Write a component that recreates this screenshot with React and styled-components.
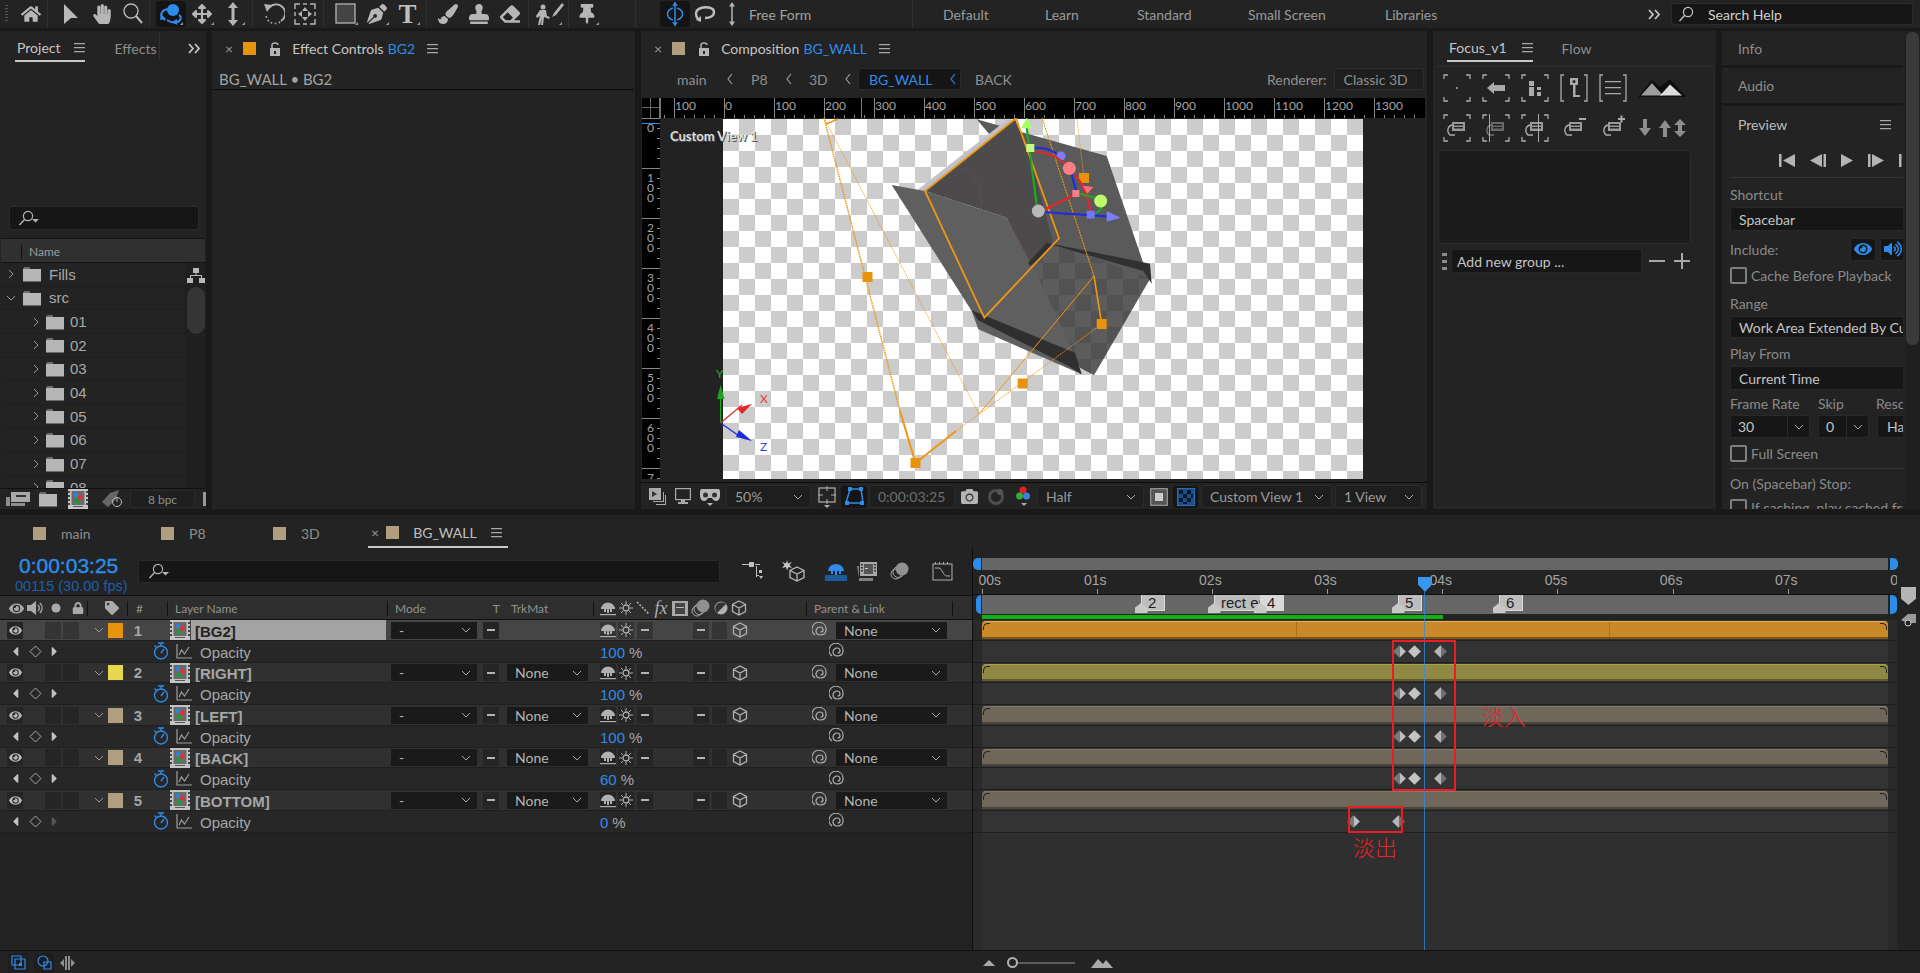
import React from "react";
import styled, { createGlobalStyle } from "styled-components";
import {
  FaHome, FaHandPaper, FaArrowsAlt, FaPenNib, FaPaintBrush, FaStamp, FaEraser,
  FaThumbtack, FaEye, FaLock, FaTag, FaCamera, FaVolumeUp, FaCaretLeft, FaCaretRight,
} from "react-icons/fa";

const BLUE = "#2d8ceb";
const SAND = "#b09f7e";

const Global = createGlobalStyle`
  html, body { margin: 0; padding: 0; background: #191919; overflow: hidden; }
  body { font-family: Lato, "Open Sans", sans-serif; font-size: 14px; color: #a6a6a6; }
  svg { display: block; flex: none; }
`;

const Page = styled.div`
  width: 1920px;
  height: 973px;
  display: flex;
  flex-direction: column;
  background: #191919;
  overflow: hidden;
`;

/* ---------- icons ---------- */
const Ic = ({ w = 16, h = 16, v, c = "#a8a8a8", children }) => (
  <svg width={w} height={h} viewBox={v || `0 0 ${w} ${h}`} fill={c}>{children}</svg>
);
const Line = ({ c = "#a8a8a8", s = 1, ...rest }) => <path fill="none" stroke={c} strokeWidth={s} {...rest} />;

const MenuIcon = () => (
  <Ic w={11} h={10} c="#a8a8a8"><path d="M0 0h11v1.2H0zM0 4h11v1.2H0zM0 8h11v1.2H0z" /></Ic>
);
const Chevrons = () => (
  <Ic w={13} h={11}><Line s={1.8} c="#c4c4c4" d="M1 1l4 4.5-4 4.5M7 1l4 4.5-4 4.5" /></Ic>
);
const Caret = ({ c = "#a8a8a8" }) => (
  <Ic w={10} h={6}><Line c={c} d="M1 1l4 4 4-4" /></Ic>
);
const TwirlRight = () => <Ic w={6} h={10}><Line c="#999" d="M1 1l4 4-4 4" /></Ic>;
const CrumbChev = ({ c = "#a0a0a0" }) => <Ic w={6} h={12}><Line c={c} s={1.1} d="M5 1L1 6l4 5" /></Ic>;
const LockOpen = () => (
  <Ic w={10} h={14} c="#b4b4b4">
    <path d="M0 6h10v8H0z" /><Line c="#b4b4b4" s={1.5} d="M2 6V3a3 2 0 0 1 6 0" />
    <path d="M4 9h2v3H4z" fill="#232323" />
  </Ic>
);
const SearchGlass = ({ c = "#b4b4b4", drop }) => (
  <Ic w={22} h={16}>
    <circle cx="10" cy="6" r="4.6" fill="none" stroke={c} strokeWidth="1.2" />
    <Line c={c} s={1.4} d="M6.5 9.5L1.5 15" />
    {drop && <path d="M14 9h7l-3.5 3.5z" fill={c} />}
  </Ic>
);
const Folder = ({ w = 18 }) => (
  <Ic w={w} h={16} v="0 0 18 16" c="#b6b6b6">
    <path d="M0 2.5h7V1.5H1zM0 3h18v12H0z" /><path d="M0 15h18v1H0z" fill="#6a6a6a" />
  </Ic>
);
const ArrowTool = () => (
  <Ic w={16} h={22} c="#b8b8b8"><path d="M1 1l14 14-7 0-7 6z" /></Ic>
);
const ZoomTool = () => (
  <Ic w={22} h={24}>
    <circle cx="9" cy="9" r="7" fill="none" stroke="#b8b8b8" strokeWidth="1.4" />
    <Line c="#b8b8b8" s={2} d="M14 14l6 7" />
  </Ic>
);
const OrbitTool = () => (
  <Ic w={24} h={24}>
    <circle cx="14" cy="8" r="6" fill={BLUE} />
    <Line c={BLUE} s={2} d="M9 7c-6 1-8 5-6 8l3 3M20 13c3 2 2 6-2 7-3 1-7 0-10-2" />
    <path d="M2 12l5 5-6 1zM18 17v6l-5-3z" fill={BLUE} />
  </Ic>
);
const DollyTool = () => (
  <Ic w={14} h={24} c="#b4b4b4"><path d="M7 0l5 6H8.5v12H12l-5 6-5-6h3.5V6H2z" /></Ic>
);
const UndoTool = () => (
  <Ic w={22} h={24}>
    <Line c="#b4b4b4" s={1.8} d="M6 6a9 9 0 1 1 12 13" />
    <Line c="#b4b4b4" s={1.6} strokeDasharray="1.5 2.5" d="M17 20a9 9 0 0 1-14-8" />
    <path d="M1 2l8 1-5 7z" fill="#b4b4b4" />
  </Ic>
);
const SnapTool = () => (
  <Ic w={22} h={22} c="#b4b4b4">
    <Line c="#b4b4b4" s={1.4} d="M1 6V1h5M16 1h5v5M21 16v5h-5M6 21H1v-5M9 1h4M9 21h4M1 9v4M21 9v4" />
    <path d="M11 4l3 4H8zM11 18l3-4H8zM4 11l4-3v6zM18 11l-4-3v6z" />
  </Ic>
);
const RectTool = () => (
  <Ic w={22} h={22}><rect x="1" y="1" width="19" height="19" fill="#444" stroke="#aaa" strokeWidth="1.4" /></Ic>
);
const StackedRoto = () => (
  <Ic w={28} h={24} v="0 0 28 24" c="#b4b4b4">
    <circle cx="7" cy="5" r="2.5" />
    <path d="M4 8h6l1 6 3 1-1 2-5-2-1 8H5l1-7-2 7H2l2-9-3 2-1-2z" />
    <path d="M26 1l-8 10-2 4 4-2 8-10z" />
  </Ic>
);
const AxisTool = () => (
  <Ic w={24} h={24} v="0 0 24 32">
    <Line c={BLUE} s={2} d="M12 0v32" />
    <path d="M12 0l4 5H8zM12 32l4-5H8z" fill={BLUE} />
    <Line c={BLUE} s={2} d="M9 8C4 10 2 13 2 16s2 6 7 8M15 8c5 2 7 5 7 8s-2 6-7 8" />
  </Ic>
);
const LassoTool = () => (
  <Ic w={22} h={16}>
    <Line c="#bdbdbd" s={2.4} d="M4 13C1 9 1 4 7 2c6-2 13 0 13 4s-4 6-9 6" />
    <path d="M2 14l5-4 0 6z" fill="#bdbdbd" />
  </Ic>
);
const IArrowTool = () => (
  <Ic w={10} h={24} v="0 0 10 32" c="#b4b4b4"><path d="M5 0l4 6H6v20h3l-4 6-4-6h3V6H1z" /></Ic>
);

const ShyIcon = ({ c = "#b0b0b0", w = 16, h = 15 }) => (
  <Ic w={w} h={h} v="0 0 16 15" c={c}>
    <path d="M1 8a7 6.5 0 0 1 14 0H12v3H10V8H9v4H7V8H6v3H4V8z" /><path d="M0 13h16v1.2H0z" />
  </Ic>
);
const SunIcon = () => (
  <Ic w={14} h={14}>
    <circle cx="7" cy="7" r="3" fill="none" stroke="#b0b0b0" strokeWidth="1.3" />
    <Line c="#b0b0b0" d="M7 0v3M7 11v3M0 7h3M11 7h3M2 2l2 2M10 10l2 2M12 2l-2 2M2 12l2-2" />
  </Ic>
);
const CubeIcon = () => (
  <Ic w={16} h={16}>
    <Line c="#b0b0b0" s={1.3} d="M8 1l6.5 3.5v7L8 15l-6.5-3.5v-7zM1.5 4.5L8 8l6.500-3.500M8 8v7" />
  </Ic>
);
const Spiral = () => (
  <Ic w={16} h={16}>
    <Line c="#b0b0b0" s={1.2} d="M3 13A7 7 0 1 1 14 8c0 4-3 5-6 5-2.5 0-4-2-4-4s2-4 4-4 3 1.5 3 3-1 2-2.5 2" />
  </Ic>
);
const Stopwatch = () => (
  <Ic w={16} h={18}>
    <circle cx="8" cy="10.5" r="6.5" fill="none" stroke={BLUE} strokeWidth="1.4" />
    <Line c={BLUE} s={1.4} d="M5 1h6M8 1v3M8 11l3-4M1.5 3.5l2 2" />
  </Ic>
);
const GraphIcon = () => (
  <Ic w={16} h={15}>
    <Line c="#9f9f9f" s={1.2} d="M1 0v14h15M3 11l2.5-5 3 4L13 3" />
  </Ic>
);
const CompIcon = () => (
  <Ic w={20} h={20}>
    <rect width="20" height="20" fill="#c4c4c4" />
    <rect x="3.5" y="2" width="13" height="14" fill="#6a6a6a" />
    <path d="M0 2h2v2H0zM0 6h2v2H0zM0 10h2v2H0zM0 14h2v2H0zM18 2h2v2h-2zM18 6h2v2h-2zM18 10h2v2h-2zM18 14h2v2h-2z" fill="#444" />
    <path d="M5 17h10v1H5z" fill="#555" />
    <circle cx="8" cy="6" r="2.5" fill="#2a84d8" />
    <rect x="10" y="6" width="4.5" height="4.5" fill="#d8353a" />
    <path d="M9 8l3.5 6h-7z" fill="#1d9a3a" />
  </Ic>
);
const Diamond = ({ c = "#a8a8a8" }) => (
  <Ic w={13} h={13}><path d="M6.5 1L12 6.5 6.5 12 1 6.5z" fill="none" stroke={c} /></Ic>
);
const TreeIcon = () => (
  <Ic w={22} h={20} c="#c0c0c0">
    <path d="M1 3h7V1h5v5H8V4H1zM14 3h5v1h-5zM15 5h1v11h-1zM15 9h3v3h3v-3h-6zM15 14h3v1h-3z" />
    <path d="M18 15h4l-2 3z" />
  </Ic>
);
const StarCube = () => (
  <Ic w={24} h={22}>
    <path d="M5 0l1 3.5L10 2 7.5 5 10 8l-3.5-1L5 10.5 4 7 0 8l2.5-3L0 2l4 1.5z" fill="#c8c8c8" />
    <Line c="#b8b8b8" s={1.3} d="M15 7l7 3.5v7L15 21l-7-3.5v-7zM8 10.5l7 3.5 7-3.5M15 14v7" />
  </Ic>
);
const ShyActive = () => (
  <Ic w={22} h={19} v="0 0 22 19">
    <path d="M3 9a8 7 0 0 1 16 0h-3v3h-2V9h-2v4h-2V9H8v3H6V9z" fill={BLUE} /><path d="M0 13h22v6H0z" fill="#1d5a9a" />
  </Ic>
);
const FilmStack = () => (
  <Ic w={20} h={20} c="#a8a8a8">
    <path d="M3 1h17v14H3z" /><path d="M0 5h2v15h14v-3H2z" opacity=".7" />
    <path d="M7 3h9v10H7z" fill="#555" /><path d="M8 7h3v1H8z" fill="#ccc" />
    <path d="M4 3h2v1.5H4zM4 6h2v1.5H4zM4 9h2v1.5H4zM17 3h2v1.5h-2zM17 6h2v1.5h-2zM17 9h2v1.5h-2z" fill="#333" />
  </Ic>
);
const CircleStack = () => (
  <Ic w={20} h={20}>
    <circle cx="6" cy="13" r="5" fill="none" stroke="#a8a8a8" />
    <circle cx="8.5" cy="11" r="5.5" fill="none" stroke="#a8a8a8" />
    <circle cx="12" cy="8" r="6.5" fill="#909090" />
  </Ic>
);
const GraphBox = () => (
  <Ic w={21} h={20}>
    <rect x="1" y="3" width="19" height="16" fill="none" stroke="#b0b0b0" />
    <path d="M3 1h1v2H3zM7 1h1v2H7zM11 1h1v2h-1zM15 1h1v2h-1z" fill="#b0b0b0" />
    <Line c="#b0b0b0" d="M3 7h4c3 0 4 8 8 8h3" />
  </Ic>
);
const HalfCircle = () => (
  <Ic w={14} h={14}>
    <circle cx="7" cy="7" r="6.5" fill="#b0b0b0" />
    <path d="M3 12A6 6 0 0 1 12 3z" fill="#333" />
  </Ic>
);
const LineSwitch = () => (
  <Ic w={14} h={14}><Line c="#b0b0b0" s={1.6} strokeDasharray="2 1.5" d="M1 1l12 12" /></Ic>
);
const FilmIcon = () => (
  <Ic w={16} h={15} c="#a8a8a8">
    <path d="M0 0h16v15H0z" /><path d="M3 2h10v11H3z" fill="#444" /><path d="M4 6h8v1H4z" fill="#bbb" />
  </Ic>
);
const Speaker = () => (
  <Ic w={16} h={16}>
    <path d="M0 5h4l5-4v14l-5-4H0z" fill="#aaa" />
    <Line c="#aaa" s={1.3} d="M11 5a4 4 0 0 1 0 6M13 3a7 7 0 0 1 0 10" />
  </Ic>
);
const Dot = () => <Ic w={10} h={10}><circle cx="5" cy="5" r="4.5" fill="#aaa" /></Ic>;

/* transport buttons */
const FirstFrame = () => <Ic w={16} h={13} c="#b4b4b4"><path d="M0 0h2.5v13H0zM16 0v13L4 6.5z" /></Ic>;
const PrevFrame = () => <Ic w={16} h={13} c="#b4b4b4"><path d="M12 0v13L0 6.5zM13.5 0H16v13h-2.5z" /></Ic>;
const PlayBtn = () => <Ic w={12} h={13} c="#b4b4b4"><path d="M0 0l12 6.5L0 13z" /></Ic>;
const NextFrame = () => <Ic w={16} h={13} c="#b4b4b4"><path d="M0 0h2.5v13H0zM4 0l12 6.5L4 13z" /></Ic>;

/* small comp toolbar glyphs */
const CbPreview = () => (
  <Ic w={17} h={18} c="#aaa"><path d="M0 0h12v12H0z" /><path d="M3 3l5 3-5 3z" fill="#333" /><path d="M14 4h1v10H4v-1h10zM16 7h1v10H7v-1h9z" /></Ic>
);
const CbDisplay = () => (
  <Ic w={16} h={17} c="#aaa">
    <rect x=".6" y=".6" width="14.8" height="11" fill="none" stroke="#aaa" strokeWidth="1.2" /><path d="M6 12h4v2H6zM3 14h10v2H3z" />
  </Ic>
);
const CbGoggles = () => (
  <Ic w={20} h={20} c="#b8b8b8">
    <path d="M2 2h16c2 0 2 2 2 4v3c0 3-2 5-4 5s-3-1-4-3h-4c-1 2-2 3-4 3s-4-2-4-5V6c0-2 0-4 2-4z" />
    <circle cx="5.5" cy="8" r="2.5" fill="#333" /><circle cx="14.5" cy="8" r="2.5" fill="#333" />
    <path d="M7 16h6l-3 3z" />
  </Ic>
);
const CbRegion = () => (
  <Ic w={18} h={22} c="#b0b0b0">
    <rect x="1" y="2" width="16" height="14" fill="none" stroke="#b0b0b0" strokeWidth="1.2" />
    <path d="M8.5 0h1v5h-1zM8.5 13h1v5h-1zM0 8.5h5v1H0zM13 8.5h5v1h-5z" /><path d="M6 19h6l-3 3z" />
  </Ic>
);
const CbMask = () => (
  <Ic w={19} h={19}>
    <path d="M5 2h11l2 14H1z" fill="none" stroke={BLUE} strokeWidth="1.5" />
    <path d="M3 0h4v4H3zM14 0h4v4h-4zM0 14h4v4H0zM15 14h4v4h-4z" fill={BLUE} />
  </Ic>
);
const CbChannels = () => (
  <Ic w={15} h={22}>
    <circle cx="7" cy="4" r="3.5" fill="#e32020" /><circle cx="3.5" cy="10" r="3.5" fill="#2fae3c" />
    <circle cx="10.5" cy="10" r="3.5" fill="#3d7fe0" /><path d="M5 17h6l-3 3z" fill="#b0b0b0" />
  </Ic>
);
const CbSnapshot = () => (
  <Ic w={18} h={17} c="#555"><circle cx="9" cy="9" r="6.5" fill="none" stroke="#4d4d4d" strokeWidth="3" /><circle cx="13" cy="4" r="3" /></Ic>
);
const CbFrame = () => (
  <Ic w={18} h={18}><rect x=".7" y=".7" width="16.6" height="16.6" fill="#555" stroke="#aaa" /><rect x="5" y="5" width="8" height="8" fill="#ccc" /></Ic>
);
const CbChecker = () => (
  <Ic w={18} h={18}>
    <rect width="18" height="18" fill="#1b4f86" stroke={BLUE} />
    <path d="M2 2h4v4H2zM10 2h4v4h-4zM6 6h4v4H6zM14 6h2v4h-2zM2 10h4v4H2zM10 10h4v4h-4zM6 14h4v2H6z" fill="#0a1a2c" />
  </Ic>
);

/* focus panel */
const Corners = ({ children }) => (
  <Ic w={28} h={28}>
    <Line c="#aaa" s={1.3} d="M1 5V1h4M23 1h4v4M27 23v4h-4M5 27H1v-4" />
    {children}
  </Ic>
);
const Brackets = ({ children }) => (
  <Ic w={28} h={28}>
    <Line c="#aaa" s={1.3} d="M4 1H1v26h3M24 1h3v26h-3" />
    {children}
  </Ic>
);
const CamSmall = ({ o = 1 }) => (
  <g opacity={o}>
    <rect x="9" y="8" width="13" height="9" fill="#999" /><rect x="11" y="10" width="9" height="1.5" fill="#222" /><rect x="11" y="13" width="9" height="1.5" fill="#222" />
    <Line c="#aaa" s={1.3} d="M9 11c-4 1-6 6-2 10h5" />
  </g>
);
const Mountains = () => (
  <Ic w={48} h={20}>
    <path d="M0 19L14 2l8 7 10-8 16 18z" fill="#0d0d0d" /><path d="M3 17.5L14 5l11 12.5z" fill="#9c9c9c" /><path d="M22 17.5l10-11 12 11z" fill="#dcdcdc" />
  </Ic>
);
const PeelArrows = () => (
  <Ic w={48} h={18} c="#8e8e8e">
    <path d="M9 0v9h4l-6 8-6-8h4V0zM25 18V9h-4l6-8 6 8h-4v9zM42 0l6 6h-4v6h4l-6 6-6-6h4V6h-4z" />
  </Ic>
);

/* ---------- top toolbar ---------- */
const TopBar = styled.div`
  height: 28px;
  display: flex;
  align-items: center;
  background: #232323;
  flex: none;
`;
const ToolGroup = styled.div`
  height: 100%;
  width: ${(p) => p.$w}px;
  flex: none;
  display: flex;
  align-items: center;
  padding-left: ${(p) => p.$pad || 0}px;
  box-sizing: border-box;
  border-right: 1px solid #2e2e2e;
`;
const Tool = styled.div`
  position: relative;
  width: ${(p) => p.$w || 31}px;
  height: 26px;
  flex: none;
  display: flex;
  align-items: center;
  justify-content: center;
  color: #b6b6b6;
  font-size: ${(p) => p.$fs || 20}px;
  background: ${(p) => (p.$on ? "#141414" : "transparent")};
  border-radius: 3px;
  &::after {
    content: "";
    display: ${(p) => (p.$corner ? "block" : "none")};
    position: absolute;
    right: 3px;
    bottom: 2px;
    border-left: 3px solid transparent;
    border-bottom: 3px solid #999;
  }
`;
const Grip = styled.div`
  width: 3px;
  height: 18px;
  margin-left: 5px;
  margin-right: 13px;
  background: repeating-linear-gradient(#555 0 1px, transparent 1px 3px);
`;
const SerifT = styled.span`
  font-family: "Liberation Serif", serif;
  font-weight: 700;
  font-size: 27px;
  line-height: 1;
  color: #bdbdbd;
`;
const FreeForm = styled.span`
  margin-left: 4px;
  color: #a0a0a0;
  font-size: 14px;
`;
const WsTab = styled.div`
  width: ${(p) => p.$w}px;
  flex: none;
  color: #9a9a9a;
  font-size: 14px;
`;
const SearchHelp = styled.div`
  width: 242px;
  height: 22px;
  margin-left: 6px;
  display: flex;
  align-items: center;
  gap: 8px;
  padding-left: 6px;
  box-sizing: border-box;
  background: #161616;
  border: 1px solid #2c2c2c;
  border-radius: 3px;
  color: #cfcfcf;
  font-size: 14px;
`;

/* ---------- panels ---------- */
const Upper = styled.div`
  height: 478px;
  margin-top: 3px;
  display: flex;
  gap: 6px;
  flex: none;
`;
const Panel = styled.div`
  width: ${(p) => p.$w}px;
  flex: none;
  background: #232323;
  display: flex;
  flex-direction: column;
  overflow: hidden;
  box-sizing: border-box;
`;
const PanelHead = styled.div`
  height: 31px;
  flex: none;
  display: flex;
  align-items: center;
  padding: 4px 0 0 ${(p) => p.$pl || 0}px;
  box-sizing: border-box;
  font-size: 14px;
`;
const Tab = styled.div`
  height: 31px;
  margin-top: -4px;
  display: flex;
  align-items: center;
  box-sizing: border-box;
  gap: ${(p) => p.$gap || 10}px;
  padding: ${(p) => p.$pad || "4px 2px 0"};
  color: ${(p) => (p.$on ? "#c6c6c6" : "#8e8e8e")};
  border-bottom: 2px solid ${(p) => (p.$on ? "#c8c8c8" : "transparent")};
`;
const TabDivider = styled.div`
  width: 1px;
  height: 27px;
  margin: -4px 0 0 2px;
  flex: none;
  background: #333;
`;
const Blue = styled.span`
  color: ${BLUE};
  margin-left: ${(p) => p.$ml || 4}px;
`;
const Swatch = styled.div`
  width: ${(p) => p.$s || 13}px;
  height: ${(p) => p.$s || 13}px;
  flex: none;
  background: ${(p) => p.$c};
`;
const CloseX = styled.span`
  color: #9a9a9a;
  font-size: 14px;
  line-height: 1;
`;
const HeadSlot = styled.div`
  margin-left: ${(p) => p.$ml || 0}px;
  flex: none;
  display: flex;
  align-items: center;
  color: ${(p) => (p.$bright ? "#c6c6c6" : "#8e8e8e")};
`;

/* project */
const ProjectSearch = styled.div`
  height: 24px;
  margin: 144px 7px 0 9px;
  flex: none;
  display: flex;
  align-items: center;
  padding-left: 8px;
  background: #161616;
  border: 1px solid #2b2b2b;
  border-radius: 3px;
  box-sizing: border-box;
`;
const NameHeader = styled.div`
  height: 25px;
  margin: 8px 1px 0 1px;
  flex: none;
  background: #303030;
  border-top: 1px solid #121212;
  border-bottom: 1px solid #121212;
  box-sizing: border-box;
  display: flex;
  align-items: center;
  font-size: 12px;
  padding: 2px 0 0 20px;
  color: #9d9d9d;
  &::before {
    content: "";
    width: 1px;
    height: 14px;
    background: #111;
    margin-right: 7px;
  }
`;
const ProjectBody = styled.div`
  height: 225px;
  flex: none;
  display: flex;
  overflow: hidden;
`;
const ProjectList = styled.div`
  width: 184px;
  flex: none;
  padding-left: 1px;
`;
const ProjectRow = styled.div`
  height: 23.67px;
  display: flex;
  align-items: center;
  box-sizing: border-box;
  border-bottom: 1px solid #1e1e1e;
  padding-left: ${(p) => (p.$sub ? 30 : 5)}px;
  font-family: "Liberation Sans", sans-serif;
  font-size: 15px;
  color: #a8a8a8;
  gap: ${(p) => (p.$sub ? 6 : 8)}px;
`;
const TwirlBox = styled.span`
  width: 9px;
  display: flex;
  justify-content: center;
  flex: none;
`;
const ProjectSide = styled.div`
  width: 21px;
  flex: none;
  background: #1f1f1f;
  display: flex;
  flex-direction: column;
  align-items: center;
  padding-top: 4px;
  gap: 2px;
`;
const Thumb = styled.div`
  width: 18px;
  height: 47px;
  background: #353535;
  border-radius: 9px;
  flex: none;
`;
const ProjectFoot = styled.div`
  height: 20px;
  flex: none;
  border-top: 1px solid #111;
  margin: 0 1px;
  display: flex;
  align-items: center;
  padding-left: 5px;
`;
const FootSlot = styled.div`
  width: ${(p) => p.$w}px;
  flex: none;
`;
const BpcBox = styled.div`
  width: 65px;
  height: 18px;
  margin-left: 3px;
  display: flex;
  align-items: center;
  justify-content: center;
  font-size: 12px;
  color: #8e8e8e;
  border: 1px solid #2b2b2b;
  border-radius: 3px;
  background: #1f1f1f;
  box-sizing: border-box;
  flex: none;
`;

/* effect controls */
const EffectTitle = styled.div`
  height: 28px;
  flex: none;
  margin: 0 1px;
  padding: 7px 0 0 6px;
  display: flex;
  align-items: center;
  color: #a2a2a2;
  font-size: 15px;
  border-bottom: 1px solid #0c0c0c;
  box-sizing: border-box;
`;

/* composition */
const BreadRow = styled.div`
  height: 32px;
  margin-top: 1px;
  flex: none;
  display: flex;
  align-items: center;
  font-size: 14px;
  color: #8f8f8f;
`;
const Crumb = styled.div`
  flex: none;
  width: ${(p) => p.$w}px;
  margin-left: ${(p) => p.$ml || 0}px;
  height: 22px;
  display: flex;
  align-items: center;
  box-sizing: border-box;
  ${(p) => p.$on && `background:#151515;border:1px solid #2b2b2b;border-radius:3px;padding:0 4px 0 10px;color:${BLUE};justify-content:space-between;`}
`;
const RendererBox = styled.div`
  width: 90px;
  height: 22px;
  margin-left: 7px;
  background: #1e1e1e;
  border: 1px solid #2e2e2e;
  border-radius: 3px;
  display: flex;
  align-items: center;
  padding-left: 9px;
  box-sizing: border-box;
  color: #8f8f8f;
`;
const HRuler = styled.div`
  height: 20px;
  margin: 3px 2px 0 1px;
  flex: none;
  background: #000;
  display: flex;
  position: relative;
  overflow: hidden;
`;
const RulerCorner = styled.div`
  width: 19px;
  flex: none;
  box-sizing: border-box;
  border-right: 2px solid #777;
  background:
    linear-gradient(#666, #666) 0 9px / 100% 1px no-repeat,
    linear-gradient(#666, #666) 8px 0 / 1px 100% no-repeat;
`;
const RulerLead = styled.div`
  width: 13px;
  flex: none;
  background: repeating-linear-gradient(90deg, #888 0 1px, transparent 1px 10px) 3px 100% / 100% 3px no-repeat;
`;
const HCell = styled.div`
  width: 50px;
  height: 100%;
  flex: none;
  box-sizing: border-box;
  border-left: 1px solid #888;
  font-size: 12px;
  line-height: 16px;
  color: #a4a4a4;
  background: repeating-linear-gradient(90deg, #888 0 1px, transparent 1px 10px) 9px 100% / 100% 3px no-repeat;
`;
const HMark = styled.div`
  position: absolute;
  left: 219px;
  top: 0;
  bottom: 0;
  width: 1px;
  background: ${BLUE};
`;
const ViewerRow = styled.div`
  height: 361px;
  flex: none;
  display: flex;
  margin: 0 2px 0 1px;
`;
const VRuler = styled.div`
  width: 18px;
  flex: none;
  background: #000;
  overflow: hidden;
  position: relative;
`;
const VMark = styled.div`
  position: absolute;
  left: 0;
  right: 0;
  top: 5px;
  height: 1px;
  background: ${BLUE};
`;
const VCell = styled.div`
  height: 50px;
  box-sizing: border-box;
  border-top: 1px solid #888;
  padding: 4px 0 0 5px;
  font-size: 12px;
  line-height: 10px;
  color: #a4a4a4;
  width: 100%;
  white-space: pre-line;
  background: repeating-linear-gradient(#888 0 1px, transparent 1px 10px) 100% 9px / 3px 100% no-repeat;
`;
const Viewer = styled.div`
  position: relative;
  flex: 1;
  background: #222;
  overflow: hidden;
`;
const Checker = styled.div`
  width: 640px;
  height: 360px;
  margin: 1px 0 0 63px;
  background-color: #fff;
  background-image: conic-gradient(#ccc 25%, transparent 0 50%, #ccc 0 75%, transparent 0);
  background-size: 32px 32px;
`;
const Drawing = styled.svg`
  position: absolute;
  left: 0;
  top: 0;
`;
const ViewLabel = styled.div`
  position: absolute;
  left: 10px;
  top: 10px;
  font-size: 13px;
  font-weight: 700;
  color: #dcdcdc;
  text-shadow: 1px 1px 0 #555;
`;
const CompBar = styled.div`
  height: 27px;
  margin-top: 3px;
  flex: none;
  border-top: 1px solid #0d0d0d;
  display: flex;
  align-items: center;
  padding-left: 3px;
  font-size: 14px;
  color: #8f8f8f;
`;
const CbSlot = styled.div`
  width: ${(p) => p.$w}px;
  margin-left: ${(p) => p.$ml || 0}px;
  height: 22px;
  flex: none;
  display: flex;
  align-items: center;
  justify-content: center;
  ${(p) => p.$on && "background:#151515;border-radius:3px;"}
`;
const CbSelect = styled.div`
  width: ${(p) => p.$w}px;
  margin-left: ${(p) => p.$ml || 0}px;
  height: 23px;
  flex: none;
  display: flex;
  align-items: center;
  justify-content: space-between;
  box-sizing: border-box;
  padding: 0 7px 0 8px;
  background: #1e1e1e;
  border: 1px solid #2c2c2c;
  border-radius: 3px;
  color: ${(p) => (p.$dim ? "#6e6e6e" : "#9a9a9a")};
`;

/* focus */
const FocusBox = styled.div`
  flex: 1;
  margin: 4px 2px 1px 1px;
  border: 1px solid #2d2d2d;
  border-radius: 3px;
  padding: 7px 0 0 3px;
  display: flex;
  flex-direction: column;
`;
const FocusIcons = styled.div`
  height: 28px;
  margin-bottom: 12px;
  flex: none;
  display: flex;
  align-items: center;
  padding-left: 5px;
  gap: 11px;
`;
const GroupArea = styled.div`
  width: 253px;
  height: 94px;
  background: #1b1b1b;
  border: 1px solid #2d2d2d;
  border-radius: 3px;
  box-sizing: border-box;
  flex: none;
  margin-top: -4px;
`;
const GroupRow = styled.div`
  height: 24px;
  margin-top: 5px;
  display: flex;
  align-items: center;
  flex: none;
`;
const GripDots = styled.div`
  width: 13px;
  height: 17px;
  flex: none;
  background: repeating-linear-gradient(#8a8a8a 0 3px, transparent 3px 7px) center / 5px 100% no-repeat;
`;
const GroupInput = styled.div`
  width: 191px;
  height: 24px;
  background: #161616;
  border: 1px solid #272727;
  border-radius: 3px;
  box-sizing: border-box;
  display: flex;
  align-items: center;
  padding-left: 5px;
  font-size: 14px;
  color: #c4c4c4;
  flex: none;
`;
const GroupBtn = styled.div`
  width: 16px;
  margin-left: ${(p) => p.$ml}px;
  flex: none;
`;

/* right panel */
const SideWrap = styled.div`
  width: 198px;
  flex: none;
  display: flex;
  background: #232323;
  overflow: hidden;
`;
const SideBody = styled.div`
  width: 181px;
  margin-right: 2px;
  flex: none;
  overflow: hidden;
  display: flex;
  flex-direction: column;
`;
const SideScroll = styled.div`
  flex: 1;
  background: #1f1f1f;
  padding: 1px 1px 0 1px;
`;
const SideThumb = styled.div`
  height: 313px;
  background: #3a3a3a;
  border-radius: 6px;
`;
const Collapsed = styled.div`
  height: ${(p) => p.$h}px;
  flex: none;
  display: flex;
  align-items: center;
  box-sizing: border-box;
  padding-left: 16px;
  color: ${(p) => (p.$on ? "#bcbcbc" : "#8e8e8e")};
  border-bottom: ${(p) => (p.$sep ? "3px solid #191919" : "none")};
  justify-content: space-between;
  padding-right: ${(p) => (p.$on ? "12px" : "0")};
`;
const TransportRow = styled.div`
  height: 35px;
  flex: none;
  display: flex;
  align-items: center;
  gap: 15px;
  padding-left: 49px;
  margin-left: 8px;
  border-bottom: 1px solid #333;
  box-sizing: border-box;
  overflow: hidden;
`;
const FieldLabel = styled.div`
  height: ${(p) => p.$h}px;
  flex: none;
  display: flex;
  align-items: center;
  padding: ${(p) => p.$pt || 0}px 0 0 8px;
  box-sizing: border-box;
  color: #8a8a8a;
  white-space: nowrap;
`;
const Field = styled.div`
  height: ${(p) => p.$h}px;
  margin-left: 8px;
  flex: none;
  width: 190px;
  display: flex;
  align-items: center;
  padding-left: 8px;
  box-sizing: border-box;
  background: #161616;
  border: 1px solid #2a2a2a;
  border-radius: 3px;
  color: #c4c4c4;
  white-space: nowrap;
  overflow: hidden;
`;
const IncludeRow = styled.div`
  height: 28px;
  margin-top: 4px;
  flex: none;
  display: flex;
  align-items: center;
  padding-left: 8px;
  color: #8a8a8a;
`;
const IncBtn = styled.div`
  width: 26px;
  height: 23px;
  margin-left: ${(p) => p.$ml || 0}px;
  flex: none;
  display: flex;
  align-items: center;
  justify-content: center;
  background: #151515;
  border: 1px solid #2a2a2a;
  border-radius: 3px;
  box-sizing: border-box;
  color: ${BLUE};
  font-size: 18px;
`;
const CheckRow = styled.div`
  height: ${(p) => p.$h}px;
  margin-left: 8px;
  flex: none;
  display: flex;
  align-items: center;
  gap: 4px;
  color: #8a8a8a;
  white-space: nowrap;
`;
const Check = styled.div`
  width: 17px;
  height: 17px;
  border: 2px solid #808080;
  border-radius: 2px;
  box-sizing: border-box;
  flex: none;
`;
const RateLabels = styled.div`
  height: 25px;
  flex: none;
  display: flex;
  align-items: center;
  padding: 2px 0 0 8px;
  box-sizing: border-box;
  color: #8a8a8a;
  white-space: nowrap;
`;
const RateLabel = styled.span`
  width: ${(p) => p.$w}px;
  flex: none;
`;
const RateFields = styled.div`
  height: 23px;
  flex: none;
  display: flex;
  padding-left: 8px;
  gap: 8px;
`;
const RateBox = styled.div`
  width: ${(p) => p.$w}px;
  flex: none;
  display: flex;
  background: #161616;
  border: 1px solid #2a2a2a;
  border-radius: 3px;
  box-sizing: border-box;
  align-items: center;
  color: #c4c4c4;
`;
const RateVal = styled.span`
  flex: 1;
  padding-left: ${(p) => p.$pl || 7}px;
  line-height: 21px;
  border-right: 1px solid #2a2a2a;
`;
const RateArrow = styled.span`
  width: 21px;
  display: flex;
  justify-content: center;
  flex: none;
`;
const Rule = styled.div`
  height: 1px;
  margin-left: 8px;
  background: #333;
  flex: none;
`;

/* ---------- timeline ---------- */
const Timeline = styled.div`
  height: 458px;
  margin-top: 6px;
  background: #232323;
  display: flex;
  flex-direction: column;
  flex: none;
`;
const CompTabs = styled.div`
  height: 33px;
  flex: none;
  display: flex;
  align-items: flex-end;
  padding-left: 33px;
`;
const CompTab = styled.div`
  display: flex;
  align-items: center;
  height: 26px;
  flex: none;
  width: ${(p) => p.$w}px;
  gap: ${(p) => p.$gap || 15}px;
  box-sizing: border-box;
  color: ${(p) => (p.$on ? "#c0c0c0" : "#8e8e8e")};
  font-size: 14px;
  padding-bottom: 3px;
  ${(p) => p.$on && "border-bottom:2px solid #c8c8c8;padding-left:3px;margin-left:-2px;"}
`;
const Split = styled.div`
  height: 402px;
  flex: none;
  display: flex;
`;
const LeftPane = styled.div`
  width: 972px;
  flex: none;
  display: flex;
  flex-direction: column;
  border-right: 1px solid #0f0f0f;
  box-sizing: content-box;
`;
const TimeRow = styled.div`
  height: 47px;
  flex: none;
  display: flex;
  align-items: center;
  border-bottom: 1px solid #0f0f0f;
`;
const TimeBlock = styled.div`
  width: 138px;
  padding: 5px 0 0 15px;
  box-sizing: border-box;
  flex: none;
  font-family: "Liberation Sans", sans-serif;
`;
const TimeCode = styled.div`
  font-size: 21px;
  line-height: 23px;
  color: ${BLUE};
  font-weight: 400;
  padding-left: 4px;
  -webkit-text-stroke: 0.4px ${BLUE};
`;
const Fps = styled.div`
  font-size: 14.5px;
  line-height: 18px;
  color: #1d5fa8;
`;
const LayerSearch = styled.div`
  width: 582px;
  height: 23px;
  margin-top: -1px;
  flex: none;
  background: #161616;
  border: 1px solid #2a2a2a;
  border-radius: 3px;
  box-sizing: border-box;
  display: flex;
  align-items: center;
  padding-left: 9px;
`;
const RowTool = styled.div`
  flex: none;
  margin-left: ${(p) => p.$ml}px;
  margin-top: -1px;
`;
const HeaderRow = styled.div`
  height: 24px;
  flex: none;
  display: flex;
  align-items: center;
  background: #2e2e2e;
  border-bottom: 1px solid #0f0f0f;
  box-sizing: border-box;
  font-size: 12px;
  color: #919191;
  padding-top: 1px;
`;
const HeadCol = styled.div`
  width: ${(p) => p.$w}px;
  height: 15px;
  flex: none;
  display: flex;
  align-items: center;
  gap: ${(p) => p.$gap || 0}px;
  box-sizing: border-box;
  padding-left: ${(p) => p.$pl || 0}px;
  border-left: ${(p) => (p.$first ? "none" : "1px solid #111")};
`;
const Spacer = styled.span`
  width: ${(p) => p.$w}px;
  flex: none;
`;
const Fx = styled.span`
  font-family: "Liberation Serif", serif;
  font-style: italic;
  font-size: 18px;
  color: #b0b0b0;
  width: 16px;
  text-align: center;
`;

const LAYER_COLS = `7px [eye] 16px 22px [solo] 16px 2px [lock] 16px 14px [twirl] 12px 3px [sq] 15px 5px [num] 20px 22px [src] 20px 1px [name] 195px 5px [mode] 86px 6px [t] 16px 8px [trk] 81px 12px [s1] 16px 2px [s2] 16px 3px [s3] 16px 40px [s4] 16px 3px [s5] 15px 5px [s6] 16px 64px [pi] 16px 8px [pd] 111px`;
const PROP_COLS = `7px [prev] 16px 4px [diam] 16px 3px [next] 16px 89px [watch] 20px 5px [graph] 16px 8px [label] 400px [val] 229px [spiral] 16px`;

const LayerGrid = styled.div`
  height: 20.5px;
  display: grid;
  grid-template-columns: ${LAYER_COLS};
  align-items: center;
  background: ${(p) => (p.$sel ? "#454545" : "#303030")};
  border-bottom: 1px solid #1f1f1f;
  box-sizing: border-box;
  font-size: 14px;
`;
const PropGrid = styled.div`
  height: 22px;
  display: grid;
  grid-template-columns: ${PROP_COLS};
  align-items: center;
  background: #272727;
  border-bottom: 1px solid #1f1f1f;
  box-sizing: border-box;
`;
const At = styled.div`
  grid-column: ${(p) => p.$c};
  display: flex;
  align-items: center;
  justify-content: ${(p) => (p.$left ? "flex-start" : "center")};
  min-width: 0;
`;
const SwitchBox = styled(At)`
  height: 17px;
  background: ${(p) => (p.$ghost ? "transparent" : p.$sel ? "#343434" : "#252525")};
`;
const DashIcon = styled.span`
  width: 8px;
  height: 2px;
  background: #b4b4b4;
`;
const LayerNum = styled(At)`
  font-family: "Liberation Sans", sans-serif;
  font-weight: 700;
  font-size: 15px;
  color: #a6a6a6;
`;
const LayerName = styled(At)`
  height: 20px;
  padding: 2px 0 0 4px;
  box-sizing: border-box;
  font-family: "Liberation Sans", sans-serif;
  font-weight: 700;
  font-size: 15px;
  color: ${(p) => (p.$sel ? "#222" : "#a6a6a6")};
  background: ${(p) => (p.$sel ? "#a3a3a3" : "transparent")};
`;
const Select = styled(At)`
  height: 17px;
  background: #1a1a1a;
  color: #b4b4b4;
  justify-content: space-between;
  padding: 0 6px 0 8px;
  font-size: 14px;
`;
const PropLabel = styled(At)`
  padding-top: 2px;
  font-family: "Liberation Sans", sans-serif;
  font-size: 15px;
  color: #a6a6a6;
`;
const PropVal = styled(At)`
  padding-top: 2px;
  font-family: "Liberation Sans", sans-serif;
  font-size: 15px;
  color: #a6a6a6;
  gap: 4px;
`;
const ValBlue = styled.span`
  color: ${BLUE};
`;
const LeftFill = styled.div`
  flex: 1;
`;

/* right side */
const RightPane = styled.div`
  flex: 1;
  display: flex;
`;
const TimeCol = styled.div`
  position: relative;
  width: 924px;
  flex: none;
  display: flex;
  flex-direction: column;
`;
const NavBar = styled.div`
  height: 12px;
  margin-top: 10px;
  flex: none;
  display: flex;
  gap: 1px;
`;
const BlueCap = styled.div`
  width: ${(p) => p.$w || 8}px;
  margin-left: ${(p) => p.$ml || 0}px;
  flex: none;
  background: ${BLUE};
  border-radius: ${(p) => (p.$right ? "0 5px 5px 0" : "5px 0 0 5px")};
`;
const GrayTrack = styled.div`
  width: 906px;
  flex: none;
  background: #666;
  position: relative;
`;
const RulerRow = styled.div`
  height: 24px;
  margin-left: 6px;
  flex: none;
  display: grid;
  grid-template-columns: repeat(9, 115.2px);
  padding-left: 3px;
  overflow: hidden;
`;
const TimeTick = styled.div`
  display: flex;
  flex-direction: column;
  align-items: center;
  width: 60px;
  margin-left: -30px;
  font-family: "Liberation Sans", sans-serif;
  font-size: 14px;
  line-height: 18px;
  color: #a4a4a4;
  padding-top: 1px;
  white-space: nowrap;
  & > span {
    position: relative;
    left: -2px;
  }
  &:first-child > span {
    left: 2px;
  }
  &::after {
    content: "";
    width: 1px;
    height: 5px;
    background: #999;
  }
`;
const WorkRow = styled.div`
  height: 20px;
  flex: none;
  display: flex;
  gap: 1px;
  border-top: 1px solid #0f0f0f;
  box-sizing: border-box;
  padding-left: 3px;
`;
const GreenRow = styled.div`
  height: 6px;
  flex: none;
  padding: 1px 0 1px 9px;
  box-sizing: border-box;
`;
const GreenBar = styled.div`
  width: 461px;
  height: 100%;
  background: #12b012;
`;
const TrackRow = styled.div`
  position: relative;
  height: ${(p) => p.$h}px;
  flex: none;
  box-sizing: border-box;
  padding: 1px 9px 1px 9px;
  background: linear-gradient(90deg, #2a2a2a 9px, #333 9px, #333 915px, #2a2a2a 915px);
  border-bottom: 1px solid #1e1e1e;
  display: flex;
`;
const LayerBar = styled.div`
  position: relative;
  flex: 1;
  background: ${(p) => p.$c};
  border-top: 1px solid ${(p) => p.$hi};
  border-bottom: 2px solid ${(p) => p.$lo};
  border-radius: 4px 4px 0 0;
  &::before,
  &::after {
    content: "";
    position: absolute;
    top: 1px;
    width: 6px;
    height: 6px;
    border-top: 1px solid #222;
  }
  &::before {
    left: 1px;
    border-left: 1px solid #222;
    border-top-left-radius: 5px;
  }
  &::after {
    right: 1px;
    border-right: 1px solid #222;
    border-top-right-radius: 5px;
  }
`;
const Seam = styled.i`
  position: absolute;
  top: 0;
  bottom: 0;
  width: 1px;
  background: #b07018;
`;
const Keyframe = styled.i`
  position: absolute;
  top: 50%;
  width: 9px;
  height: 9px;
  margin: -4.5px 0 0 -4.5px;
  transform: rotate(45deg);
  background: ${(p) =>
    p.$dim === "l"
      ? "linear-gradient(45deg, #787878 50%, #bdbdbd 50%)"
      : p.$dim === "r"
        ? "linear-gradient(45deg, #b5b5b5 50%, #707070 50%)"
        : "#c4c4c4"};
`;
const Emptyfill = styled.div`
  flex: 1;
  background: linear-gradient(90deg, #2a2a2a 9px, #2f2f2f 9px, #2f2f2f 915px, #2a2a2a 915px);
`;
const Marker = styled.div`
  position: absolute;
  top: 0;
  height: 16px;
  width: ${(p) => p.$w}px;
  background: ${(p) => p.$c || "#bdbdbd"};
  border: 1px solid #dadada;
  border-top: none;
  box-sizing: border-box;
  font-family: "Liberation Sans", sans-serif;
  font-size: 15px;
  line-height: 15px;
  color: #1e1e1e;
  padding-left: 6px;
  white-space: nowrap;
  overflow: hidden;
`;
const House = styled.div`
  position: absolute;
  top: 8px;
  width: 13px;
  height: 10px;
  margin-left: -6.5px;
  background: #c8c8c8;
  clip-path: polygon(50% 0, 100% 50%, 100% 100%, 0 100%, 0 50%);
`;
const PlayLine = styled.div`
  position: absolute;
  left: 451px;
  top: 44px;
  bottom: 0;
  width: 1px;
  background: ${BLUE};
  opacity: 0.75;
`;
const PlayHead = styled.div`
  position: absolute;
  left: 445px;
  top: 29px;
  width: 14px;
  height: 15px;
  background: #3a97f0;
  clip-path: polygon(0 0, 100% 0, 100% 50%, 50% 100%, 0 50%);
`;
const RedBox = styled.div`
  position: absolute;
  left: ${(p) => p.$x}px;
  top: ${(p) => p.$y}px;
  width: ${(p) => p.$w}px;
  height: ${(p) => p.$h}px;
  border: 2px solid #ea1c24;
  box-sizing: border-box;
`;
const RedNote = styled.div`
  position: absolute;
  left: ${(p) => p.$x}px;
  top: ${(p) => p.$y}px;
  font-family: "Noto Sans CJK SC", sans-serif;
  font-weight: 300;
  font-size: 22px;
  line-height: 24px;
  color: #e8222a;
  white-space: nowrap;
`;
const SideCol = styled.div`
  flex: 1;
  display: flex;
  flex-direction: column;
  align-items: center;
  padding-top: 39px;
`;
const Shield = styled.div`
  width: 15px;
  height: 18px;
  background: #b4b4b4;
  clip-path: polygon(0 0, 100% 0, 100% 65%, 50% 100%, 0 65%);
  margin-bottom: 8px;
  flex: none;
`;
const FootBar = styled.div`
  height: 23px;
  flex: none;
  border-top: 1px solid #0f0f0f;
  display: flex;
  align-items: center;
  padding-left: 8px;
  gap: 6px;
`;
const FootBtn = styled.div`
  width: 20px;
  height: 19px;
  display: flex;
  align-items: center;
  justify-content: center;
  background: #1e1e1e;
  flex: none;
`;
const ZoomSlider = styled.div`
  margin-left: 902px;
  display: flex;
  align-items: center;
  flex: none;
`;
const SliderTrack = styled.div`
  width: 62px;
  height: 2px;
  background: #5c5c5c;
  margin: 0 16px 0 18px;
  display: flex;
  align-items: center;
`;
const SliderKnob = styled.div`
  width: 11px;
  height: 11px;
  margin-left: -6px;
  border: 2px solid #b0b0b0;
  border-radius: 50%;
  background: #232323;
  box-sizing: border-box;
`;

/* ---------- composition drawing: coordinates are screen pixels ---------- */
const z = (x, y) => `${(880 + x / 3).toFixed(1)},${(110 + y / 3).toFixed(1)}`;
const poly = (...pts) => pts.map(([x, y]) => z(x, y)).join(" ");
const ORANGE = "#ef9612";
const Handle = ({ x, y, s = 10 }) => <rect x={x - s / 2} y={y - s / 2} width={s} height={s} fill="#e8930c" />;

const Scene = () => (
  <Drawing width="763" height="361" viewBox="660 117 763 361">
    <polygon points={poly([510, 400], [800, 480], [812, 500], [642, 793], [600, 770], [555, 680], [450, 470])} fill="#333" fillOpacity=".8" />
    <polygon points={poly([290, 25], [680, 135], [805, 500], [520, 400], [480, 300], [405, 60], [345, 90])} fill="#5a5a5a" />
    <polygon points={poly([405, 25], [135, 240], [380, 320], [450, 470], [520, 395], [445, 120])} fill="#4c4a4a" />
    <polygon points={poly([380, 27], [405, 25], [135, 240], [108, 240])} fill="#bfc2c6" />
    <polygon points={poly([190, 195], [405, 27], [135, 240])} fill="#4a4c50" />
    <path d={`M${z(240, 175)} C${z(300, 170)} ${z(310, 280)} ${z(300, 300)}`} fill="none" stroke="#5e4f4f" />
    <path d={`M${z(365, 240)} L${z(430, 235)} L${z(400, 270)} L${z(365, 275)} L${z(450, 450)}`} fill="none" stroke="#5d4545" />
    <polygon points={poly([35, 222], [135, 240], [380, 320], [470, 490], [560, 680], [605, 790], [295, 655], [275, 600])} fill="#5f5f5f" />
    <polygon points={poly([275, 598], [585, 725], [605, 790], [565, 765], [295, 628])} fill="#2f2f2f" />
    <polygon points={poly([500, 395], [810, 458], [815, 518], [790, 480], [520, 403], [450, 465], [445, 455])} fill="#313131" />

    <polygon points={poly([408, 22], [135, 240], [313, 620], [537, 382])} fill="none" stroke={ORANGE} strokeWidth="1.8" />
    <polyline points="824,117 900,410" fill="none" stroke={ORANGE} strokeWidth="1.5" strokeDasharray="1.5 .8" />
    <polyline points="900,410 915.5,462 956,430" fill="none" stroke={ORANGE} strokeWidth="2" />
    <polyline points="956,430 1101.7,323" fill="none" stroke={ORANGE} strokeWidth=".9" strokeDasharray="1.5 .8" />
    <polyline points="824,117 979,413" fill="none" stroke={ORANGE} strokeWidth=".8" strokeDasharray="1.5 .8" />
    <polyline points="979,413 1094,275" fill="none" stroke={ORANGE} strokeWidth="1" />
    <polyline points="1094,275 1101.7,323" fill="none" stroke={ORANGE} strokeWidth="1.6" />
    <polyline points="1094,275 1042,117" fill="none" stroke={ORANGE} strokeWidth="1.1" strokeDasharray="2 .8" />
    <polyline points="1084,177 1077,118" fill="none" stroke={ORANGE} strokeWidth=".8" strokeDasharray="1.5 1" />
    <polyline points="826,123 838,118" fill="none" stroke={ORANGE} strokeWidth="1.4" />
    <Handle x={867.5} y={276} /><Handle x={915.5} y={462} /><Handle x={1101.7} y={323} /><Handle x={1022.7} y={382.5} /><Handle x={1084} y={177} />

    <path d={`M${z(462, 110)} Q${z(520, 108)} ${z(548, 148)}`} fill="none" stroke="#1c2ce0" strokeWidth="2" />
    <circle cx={880 + 543 / 3} cy={110 + 135 / 3} r="4.5" fill="#7c7cf5" />
    <path d={`M${z(465, 122)} Q${z(525, 122)} ${z(565, 170)}`} fill="none" stroke="#e3262c" strokeWidth="2" />
    <polyline points={poly([440, 50], [472, 295])} fill="none" stroke="#1fa81f" strokeWidth="2.2" />
    <polygon points={poly([440, 20], [423, 52], [457, 52])} fill="#a8ff66" />
    <rect x={880 + 439 / 3} y={110 + 99 / 3} width="8" height="8" fill="#c4fb84" />
    <polyline points={poly([575, 190], [590, 245])} fill="none" stroke="#1c2ce0" strokeWidth="2.2" />
    <polyline points={poly([495, 295], [590, 248])} fill="none" stroke="#e3262c" strokeWidth="2.2" />
    <path d={`M${z(585, 190)} Q${z(625, 240)} ${z(632, 310)}`} fill="none" stroke="#e3262c" strokeWidth="2.2" />
    <polyline points={poly([600, 248], [650, 262])} fill="none" stroke="#1fa81f" strokeWidth="2" />
    <path d={`M${z(667, 285)} Q${z(662, 300)} ${z(645, 308)}`} fill="none" stroke="#1fa81f" strokeWidth="2" />
    <polygon points={poly([608, 224], [640, 228], [622, 248])} fill="#ff6f75" />
    <circle cx={880 + 568 / 3} cy={110 + 172 / 3} r="6.5" fill="#ff7e86" />
    <rect x={880 + 577 / 3} y={110 + 237 / 3} width="7" height="7" fill="#ff7e86" />
    <circle cx={880 + 662 / 3} cy={110 + 270 / 3} r="6.5" fill="#bdff6b" />
    <polyline points={poly([490, 303], [680, 316])} fill="none" stroke="#1c2ce0" strokeWidth="2.2" />
    <polygon points={poly([680, 300], [722, 320], [680, 332])} fill="#7a7ef5" />
    <rect x={880 + 620 / 3} y={110 + 299 / 3} width="8" height="8" fill="#6f78f5" />
    <circle cx={880 + 475 / 3} cy={110 + 300 / 3} r="6.5" fill="#b9b9b9" />

    <line x1="720.6" y1="393" x2="720.6" y2="422" stroke="#1aa51a" strokeWidth="1.2" />
    <polygon points="720.6,384 717,398 724.5,398" fill="#1aa51a" />
    <line x1="720.6" y1="422" x2="742" y2="404" stroke="#e3262c" strokeWidth="1.2" />
    <polygon points="752,403 737,407 742,413" fill="#e3262c" />
    <line x1="720.6" y1="422" x2="742" y2="437" stroke="#1c2ce0" strokeWidth="1.2" />
    <polygon points="752,440 739,429 736,436" fill="#1c2ce0" />
    <text x="716" y="377" fill="#2cae2c" fontFamily="Lato, sans-serif" fontSize="12">Y</text>
    <text x="760" y="402" fill="#e03a40" fontFamily="Lato, sans-serif" fontSize="12">X</text>
    <text x="760" y="450" fill="#2f3fe0" fontFamily="Lato, sans-serif" fontSize="12">Z</text>
  </Drawing>
);

/* ---------- data ---------- */
const FOLDERS = ["01", "02", "03", "04", "05", "06", "07", "08"];
const LAYERS = [
  { n: 1, name: "[BG2]", color: "#e8930c", val: "100", sel: true, bar: ["#c9892a", "#eaad55", "#7f5310"] },
  { n: 2, name: "[RIGHT]", color: "#e5d94b", val: "100", bar: ["#8f8842", "#a9a24e", "#5f5a2a"] },
  { n: 3, name: "[LEFT]", color: SAND, val: "100", bar: ["#6f675a", "#81786a", "#4b453c"] },
  { n: 4, name: "[BACK]", color: SAND, val: "60", bar: ["#6f675a", "#81786a", "#4b453c"] },
  { n: 5, name: "[BOTTOM]", color: SAND, val: "0", bar: ["#6f675a", "#81786a", "#4b453c"] },
];
const KEYS_IN = [
  { x: 426, dim: "l" },
  { x: 441 },
  { x: 467, dim: "r" },
];
const KEYS_OUT = [
  { x: 380, dim: "l" },
  { x: 425, dim: "r" },
];
const RULE_H = ["100", "0", "100", "200", "300", "400", "500", "600", "700", "800", "900", "1000", "1100", "1200", "1300"];
const SECONDS = ["0:00s", "01s", "02s", "03s", "04s", "05s", "06s", "07s", "08s"];

const LayerRow = ({ l }) => (
  <LayerGrid $sel={l.sel}>
    <SwitchBox $c="eye" $sel={false}><FaEye size={13} color="#b8b8b8" /></SwitchBox>
    <SwitchBox $c="solo" $sel={l.sel} />
    <SwitchBox $c="lock" $sel={l.sel} />
    <At $c="twirl"><Caret c="#999" /></At>
    <At $c="sq"><Swatch $s={15} $c={l.color} /></At>
    <LayerNum $c="num">{l.n}</LayerNum>
    <At $c="src"><CompIcon /></At>
    <LayerName $c="name" $left $sel={l.sel}>{l.name}</LayerName>
    <Select $c="mode">- <Caret /></Select>
    <SwitchBox $c="t"><DashIcon /></SwitchBox>
    {!l.sel && <Select $c="trk">None <Caret /></Select>}
    <SwitchBox $c="s1" $sel={l.sel}><ShyIcon /></SwitchBox>
    <SwitchBox $c="s2" $sel={l.sel}><SunIcon /></SwitchBox>
    <SwitchBox $c="s3" $sel={l.sel}><DashIcon /></SwitchBox>
    <SwitchBox $c="s4" $sel={l.sel}><DashIcon /></SwitchBox>
    <SwitchBox $c="s5" $sel={l.sel} />
    <SwitchBox $c="s6" $ghost><CubeIcon /></SwitchBox>
    <At $c="pi"><Spiral /></At>
    <Select $c="pd">None <Caret /></Select>
  </LayerGrid>
);

const PropRow = ({ l }) => (
  <PropGrid>
    <At $c="prev"><FaCaretLeft size={15} color="#c0c0c0" /></At>
    <At $c="diam"><Diamond /></At>
    <At $c="next"><FaCaretRight size={15} color={l.n === 5 ? "#555" : "#c0c0c0"} /></At>
    <At $c="watch"><Stopwatch /></At>
    <At $c="graph"><GraphIcon /></At>
    <PropLabel $c="label" $left>Opacity</PropLabel>
    <PropVal $c="val" $left><ValBlue>{l.val}</ValBlue> %</PropVal>
    <At $c="spiral"><Spiral /></At>
  </PropGrid>
);

export default function App() {
  return (
    <Page>
      <Global />
      <TopBar>
        <ToolGroup $w={48}>
          <Grip />
          <Tool $w={20}><FaHome /></Tool>
        </ToolGroup>
        <ToolGroup $w={102} $pad={7}>
          <Tool><ArrowTool /></Tool>
          <Tool><FaHandPaper /></Tool>
          <Tool><ZoomTool /></Tool>
        </ToolGroup>
        <ToolGroup $w={103} $pad={6}>
          <Tool $w={30} $on $corner><OrbitTool /></Tool>
          <Tool $corner><FaArrowsAlt /></Tool>
          <Tool $corner><DollyTool /></Tool>
        </ToolGroup>
        <ToolGroup $w={71} $pad={5}>
          <Tool><UndoTool /></Tool>
          <Tool><SnapTool /></Tool>
        </ToolGroup>
        <ToolGroup $w={103} $pad={6}>
          <Tool $corner><RectTool /></Tool>
          <Tool $corner><FaPenNib /></Tool>
          <Tool $corner><SerifT>T</SerifT></Tool>
        </ToolGroup>
        <ToolGroup $w={102} $pad={5}>
          <Tool><FaPaintBrush /></Tool>
          <Tool><FaStamp /></Tool>
          <Tool><FaEraser /></Tool>
        </ToolGroup>
        <ToolGroup $w={40} $pad={5}>
          <Tool $corner><StackedRoto /></Tool>
        </ToolGroup>
        <ToolGroup $w={67} $pad={2}>
          <Tool $corner><FaThumbtack /></Tool>
        </ToolGroup>
        <ToolGroup $w={277} $pad={24}>
          <Tool $w={30} $on><AxisTool /></Tool>
          <Tool $w={29}><LassoTool /></Tool>
          <Tool $w={26}><IArrowTool /></Tool>
          <FreeForm>Free Form</FreeForm>
        </ToolGroup>
        <Spacer $w={30} />
        <WsTab $w={102}>Default</WsTab>
        <WsTab $w={92}>Learn</WsTab>
        <WsTab $w={111}>Standard</WsTab>
        <WsTab $w={137}>Small Screen</WsTab>
        <WsTab $w={263}>Libraries</WsTab>
        <Chevrons />
        <Spacer $w={4} />
        <SearchHelp><SearchGlass c="#c4c4c4" />Search Help</SearchHelp>
      </TopBar>

      <Upper>
        <Panel $w={206}>
          <PanelHead $pl={15}>
            <Tab $on $gap={14} $pad="4px 0 0 2px">Project <MenuIcon /></Tab>
            <HeadSlot $ml={29}>Effects</HeadSlot>
            <TabDivider />
            <HeadSlot $ml={28}><Chevrons /></HeadSlot>
          </PanelHead>
          <ProjectSearch><SearchGlass drop /></ProjectSearch>
          <NameHeader>Name</NameHeader>
          <ProjectBody>
            <ProjectList>
              <ProjectRow><TwirlBox><TwirlRight /></TwirlBox><Folder /> Fills</ProjectRow>
              <ProjectRow><TwirlBox><Caret c="#999" /></TwirlBox><Folder /> src</ProjectRow>
              {FOLDERS.map((f) => (
                <ProjectRow key={f} $sub><TwirlBox><TwirlRight /></TwirlBox><Folder /> {f}</ProjectRow>
              ))}
            </ProjectList>
            <ProjectSide>
              <Ic w={18} h={18} c="#b8b8b8"><path d="M6 1h6v5H6zM8.5 6h1v3h-1zM3 8h12v1H3zM3 9h1v2H3zM14 9h1v2h-1zM0 11h6v5H0zM12 11h6v5h-6z" /></Ic>
              <Thumb />
            </ProjectSide>
          </ProjectBody>
          <ProjectFoot>
            <FootSlot $w={33}><Ic w={24} h={15} c="#a8a8a8"><path d="M5 0h19v10H5z" /><path d="M0 5h4v9H0zM5 11h14v3H5z" opacity=".8" /><path d="M10 3h10v2H10z" fill="#333" /></Ic></FootSlot>
            <FootSlot $w={29}><Folder /></FootSlot>
            <FootSlot $w={34}><CompIcon /></FootSlot>
            <FootSlot $w={25}><Ic w={21} h={18}><path d="M0 12L8 3l9-3-3 9-8 8z" fill="#666" /><circle cx="15" cy="12" r="4.5" fill="none" stroke="#bbb" /><path d="M15 7v5" stroke="#bbb" /></Ic></FootSlot>
            <BpcBox>8 bpc</BpcBox>
            <Spacer $w={8} />
            <Ic w={4} h={14} c="#999"><path d="M0 0h4v14H0z" /></Ic>
          </ProjectFoot>
        </Panel>

        <Panel $w={423}>
          <PanelHead $pl={13}>
            <CloseX>×</CloseX>
            <HeadSlot $ml={10}><Swatch $c="#e8930c" /></HeadSlot>
            <HeadSlot $ml={14}><LockOpen /></HeadSlot>
            <HeadSlot $ml={12} $bright>Effect Controls <Blue>BG2</Blue></HeadSlot>
            <HeadSlot $ml={12}><MenuIcon /></HeadSlot>
          </PanelHead>
          <EffectTitle>BG_WALL • BG2</EffectTitle>
        </Panel>

        <Panel $w={786}>
          <PanelHead $pl={13}>
            <CloseX>×</CloseX>
            <HeadSlot $ml={10}><Swatch $c={SAND} /></HeadSlot>
            <HeadSlot $ml={14}><LockOpen /></HeadSlot>
            <HeadSlot $ml={12} $bright>Composition <Blue>BG_WALL</Blue></HeadSlot>
            <HeadSlot $ml={12}><MenuIcon /></HeadSlot>
          </PanelHead>
          <BreadRow>
            <Crumb $w={50} $ml={36}>main</Crumb>
            <Crumb $w={24}><CrumbChev /></Crumb>
            <Crumb $w={35}>P8</Crumb>
            <Crumb $w={23}><CrumbChev /></Crumb>
            <Crumb $w={36}>3D</Crumb>
            <Crumb $w={13}><CrumbChev /></Crumb>
            <Crumb $w={103} $on>BG_WALL<CrumbChev c={BLUE} /></Crumb>
            <Crumb $w={292} $ml={14}>BACK</Crumb>
            Renderer:
            <RendererBox>Classic 3D</RendererBox>
          </BreadRow>
          <HRuler>
            <RulerCorner />
            <RulerLead />
            {RULE_H.map((t, i) => <HCell key={i}>{t}</HCell>)}
            <HMark />
          </HRuler>
          <ViewerRow>
            <VRuler>
              <VMark />
              {["0", "1\n0\n0", "2\n0\n0", "3\n0\n0", "4\n0\n0", "5\n0\n0", "6\n0\n0", "7"].map((t) => (
                <VCell key={t}>{t}</VCell>
              ))}
            </VRuler>
            <Viewer>
              <Checker />
              <Scene />
              <ViewLabel>Custom View 1</ViewLabel>
            </Viewer>
          </ViewerRow>
          <CompBar>
            <CbSlot $w={26}><CbPreview /></CbSlot>
            <CbSlot $w={26}><CbDisplay /></CbSlot>
            <CbSlot $w={28}><CbGoggles /></CbSlot>
            <CbSelect $w={85} $ml={2}>50% <Caret /></CbSelect>
            <CbSlot $w={28} $ml={2}><CbRegion /></CbSlot>
            <CbSlot $w={26} $on><CbMask /></CbSlot>
            <CbSelect $w={86} $ml={2} $dim>0:00:03:25</CbSelect>
            <CbSlot $w={28}><FaCamera size={17} color="#b4b4b4" /></CbSlot>
            <CbSlot $w={26}><CbSnapshot /></CbSlot>
            <CbSlot $w={28}><CbChannels /></CbSlot>
            <CbSelect $w={107}>Half <Caret /></CbSelect>
            <CbSlot $w={29}><CbFrame /></CbSlot>
            <CbSlot $w={25} $on><CbChecker /></CbSlot>
            <CbSelect $w={131} $ml={3}>Custom View 1 <Caret /></CbSelect>
            <CbSelect $w={87} $ml={3}>1 View <Caret /></CbSelect>
          </CompBar>
        </Panel>

        <Panel $w={283}>
          <PanelHead $pl={14}>
            <Tab $on $gap={15} $pad="4px 0 0 2px">Focus_v1 <MenuIcon /></Tab>
            <HeadSlot $ml={29}>Flow</HeadSlot>
          </PanelHead>
          <FocusBox>
            <FocusIcons>
              <Corners><circle cx="14" cy="14" r="1" fill="#aaa" /></Corners>
              <Corners><path d="M5 14l7-6v3h11v6H12v3z" fill="#aaa" /></Corners>
              <Corners><path d="M8 7h5v5H8zM8 13h5v9H8zM16 13h4v3h-4zM16 18h4v4h-4z" fill="#aaa" /></Corners>
              <Brackets><path d="M10 4h8v7h-2.5v10H20v2h-7V11h-3z" fill="#aaa" /><circle cx="14" cy="7.5" r="1.5" fill="#232323" /></Brackets>
              <Brackets><path d="M6 7h16v1.3H6zM6 13h16v1.3H6zM6 19h16v1.3H6z" fill="#aaa" /></Brackets>
              <Mountains />
            </FocusIcons>
            <FocusIcons>
              <Corners><CamSmall /></Corners>
              <Corners><CamSmall o={0.6} /><path d="M7 0h1v28H7z" fill="#aaa" /></Corners>
              <Corners><CamSmall /><path d="M17 0h1v28h-1z" fill="#aaa" /></Corners>
              <Ic w={28} h={28}><CamSmall /><path d="M19 4h7v2h-7z" fill="#aaa" /></Ic>
              <Ic w={28} h={28}><CamSmall /><path d="M19 4h7v2h-7zM21.5 1.5h2v7h-2z" fill="#aaa" /></Ic>
              <PeelArrows />
            </FocusIcons>
            <GroupArea />
            <GroupRow>
              <GripDots />
              <GroupInput>Add new group ...</GroupInput>
              <GroupBtn $ml={7}><Ic w={16} h={3} c="#a8a8a8"><path d="M0 0h16v2H0z" /></Ic></GroupBtn>
              <GroupBtn $ml={9}><Ic w={16} h={16} c="#a8a8a8"><path d="M0 7h16v2H0zM7 0h2v16H7z" /></Ic></GroupBtn>
            </GroupRow>
          </FocusBox>
        </Panel>

        <SideWrap>
          <SideBody>
            <Collapsed $h={37} $sep>Info</Collapsed>
            <Collapsed $h={38} $sep>Audio</Collapsed>
            <Collapsed $h={37} $on>Preview <MenuIcon /></Collapsed>
            <TransportRow>
              <FirstFrame /><PrevFrame /><PlayBtn /><NextFrame /><FirstFrame />
            </TransportRow>
            <FieldLabel $h={29} $pt={3}>Shortcut</FieldLabel>
            <Field $h={24}>Spacebar</Field>
            <IncludeRow>
              Include:
              <IncBtn $ml={72}><FaEye /></IncBtn>
              <IncBtn $ml={4}><FaVolumeUp /></IncBtn>
            </IncludeRow>
            <CheckRow $h={24}><Check />Cache Before Playback</CheckRow>
            <FieldLabel $h={29} $pt={3}>Range</FieldLabel>
            <Field $h={22}>Work Area Extended By Current Time</Field>
            <FieldLabel $h={28} $pt={3}>Play From</FieldLabel>
            <Field $h={24}>Current Time</Field>
            <RateLabels>
              <RateLabel $w={88}>Frame Rate</RateLabel>
              <RateLabel $w={58}>Skip</RateLabel>
              <RateLabel $w={40}>Resolution</RateLabel>
            </RateLabels>
            <RateFields>
              <RateBox $w={80}><RateVal>30</RateVal><RateArrow><Caret /></RateArrow></RateBox>
              <RateBox $w={51}><RateVal>0</RateVal><RateArrow><Caret /></RateArrow></RateBox>
              <RateBox $w={60}><RateVal $pl={9}>Half</RateVal></RateBox>
            </RateFields>
            <CheckRow $h={30}><Check />Full Screen</CheckRow>
            <Rule />
            <FieldLabel $h={28}>On (Spacebar) Stop:</FieldLabel>
            <CheckRow $h={20}><Check />If caching, play cached frames</CheckRow>
          </SideBody>
          <SideScroll><SideThumb /></SideScroll>
        </SideWrap>
      </Upper>

      <Timeline>
        <CompTabs>
          <CompTab $w={128}><Swatch $s={13} $c={SAND} />main</CompTab>
          <CompTab $w={112}><Swatch $s={13} $c={SAND} />P8</CompTab>
          <CompTab $w={97}><Swatch $s={13} $c={SAND} />3D</CompTab>
          <CompTab $w={140} $on $gap={7}><CloseX>×</CloseX><Swatch $s={13} $c={SAND} /><Spacer $w={0} />BG_WALL <Spacer $w={0} /><MenuIcon /></CompTab>
        </CompTabs>
        <Split>
          <LeftPane>
            <TimeRow>
              <TimeBlock>
                <TimeCode>0:00:03:25</TimeCode>
                <Fps>00115 (30.00 fps)</Fps>
              </TimeBlock>
              <LayerSearch><SearchGlass drop /></LayerSearch>
              <RowTool $ml={21}><TreeIcon /></RowTool>
              <RowTool $ml={19}><StarCube /></RowTool>
              <RowTool $ml={19}><ShyActive /></RowTool>
              <RowTool $ml={10}><FilmStack /></RowTool>
              <RowTool $ml={13}><CircleStack /></RowTool>
              <RowTool $ml={22}><GraphBox /></RowTool>
            </TimeRow>
            <HeaderRow>
              <HeadCol $w={87} $first $pl={9} $gap={3}><FaEye size={15} color="#aaa" /><Speaker /><Spacer $w={2} /><Dot /><Spacer $w={5} /><FaLock size={12} color="#aaa" /></HeadCol>
              <HeadCol $w={40} $pl={17}><FaTag size={14} color="#aaa" /></HeadCol>
              <HeadCol $w={40} $pl={8}>#</HeadCol>
              <HeadCol $w={220} $pl={7}>Layer Name</HeadCol>
              <HeadCol $w={206} $pl={7}>Mode<Spacer $w={67} />T<Spacer $w={11} />TrkMat</HeadCol>
              <HeadCol $w={213} $pl={6} $gap={3}><ShyIcon /><SunIcon /><LineSwitch /><Fx>fx</Fx><FilmIcon /><CircleStack /><HalfCircle /><CubeIcon /></HeadCol>
              <HeadCol $w={146} $pl={7}>Parent &amp; Link</HeadCol>
              <HeadCol $w={20} />
            </HeaderRow>
            {LAYERS.map((l) => (
              <React.Fragment key={l.n}>
                <LayerRow l={l} />
                <PropRow l={l} />
              </React.Fragment>
            ))}
            <LeftFill />
          </LeftPane>
          <RightPane>
            <TimeCol>
              <NavBar>
                <BlueCap />
                <GrayTrack />
                <BlueCap $right $ml={1} />
              </NavBar>
              <RulerRow>
                {SECONDS.map((s) => <TimeTick key={s}><span>{s}</span></TimeTick>)}
              </RulerRow>
              <WorkRow>
                <BlueCap $w={5} />
                <GrayTrack>
                  <Marker style={{ left: 159 }} $w={24}>2</Marker>
                  <Marker style={{ left: 232 }} $w={70}>rect end</Marker>
                  <Marker style={{ left: 278 }} $w={24} $c="#d8d8d8">4</Marker>
                  <Marker style={{ left: 416 }} $w={24}>5</Marker>
                  <Marker style={{ left: 517 }} $w={24}>6</Marker>
                  {[159, 232, 278, 416, 517].map((x) => <House key={x} style={{ left: x }} />)}
                </GrayTrack>
                <BlueCap $right $w={7} $ml={1} />
              </WorkRow>
              <GreenRow><GreenBar /></GreenRow>
              {LAYERS.map((l) => (
                <React.Fragment key={l.n}>
                  <TrackRow $h={20.5}>
                    <LayerBar $c={l.bar[0]} $hi={l.bar[1]} $lo={l.bar[2]}>
                      {l.sel && <><Seam style={{ left: 314 }} /><Seam style={{ left: 627 }} /></>}
                    </LayerBar>
                  </TrackRow>
                  <TrackRow $h={22}>
                    {(l.n === 5 ? KEYS_OUT : KEYS_IN).map((k) => (
                      <Keyframe key={k.x} $dim={k.dim} style={{ left: k.x }} />
                    ))}
                  </TrackRow>
                </React.Fragment>
              ))}
              <Emptyfill />
              <PlayLine />
              <PlayHead />
              <RedBox $x={419} $y={92} $w={64} $h={151} />
              <RedBox $x={375} $y={258} $w={55} $h={27} />
              <RedNote $x={509} $y={155}>淡入</RedNote>
              <RedNote $x={380} $y={286}>淡出</RedNote>
            </TimeCol>
            <SideCol>
              <Shield />
              <Ic w={18} h={14}><path d="M1 7L8 1h8v9H7z" fill="#9a9a9a" /><circle cx="8" cy="10" r="3" fill="#232323" stroke="#ccc" /></Ic>
            </SideCol>
          </RightPane>
        </Split>
        <FootBar>
          <FootBtn><Ic w={15} h={15}><Line c={BLUE} s={1.2} d="M1 1h9v9H1zM4 4h10v10H4z" /><path d="M8 8h3v3H8z" fill={BLUE} /></Ic></FootBtn>
          <FootBtn><Ic w={15} h={15}><circle cx="6" cy="6" r="5" fill="none" stroke={BLUE} strokeWidth="1.2" /><path d="M7 7h7v7H7z" fill="none" stroke={BLUE} strokeWidth="1.2" /></Ic></FootBtn>
          <Ic w={15} h={14} c="#8e8e8e"><path d="M5 0h2v14H5zM8 0h2v14H8zM4 3L0 7l4 4zM11 3l4 4-4 4z" /></Ic>
          <ZoomSlider>
            <Ic w={12} h={6} c="#aaa"><path d="M0 6l6-6 6 6z" /></Ic>
            <SliderTrack><SliderKnob /></SliderTrack>
            <Ic w={22} h={10} c="#aaa"><path d="M0 10l7-9 5 5 3-4 7 8z" /></Ic>
          </ZoomSlider>
        </FootBar>
      </Timeline>
    </Page>
  );
}
